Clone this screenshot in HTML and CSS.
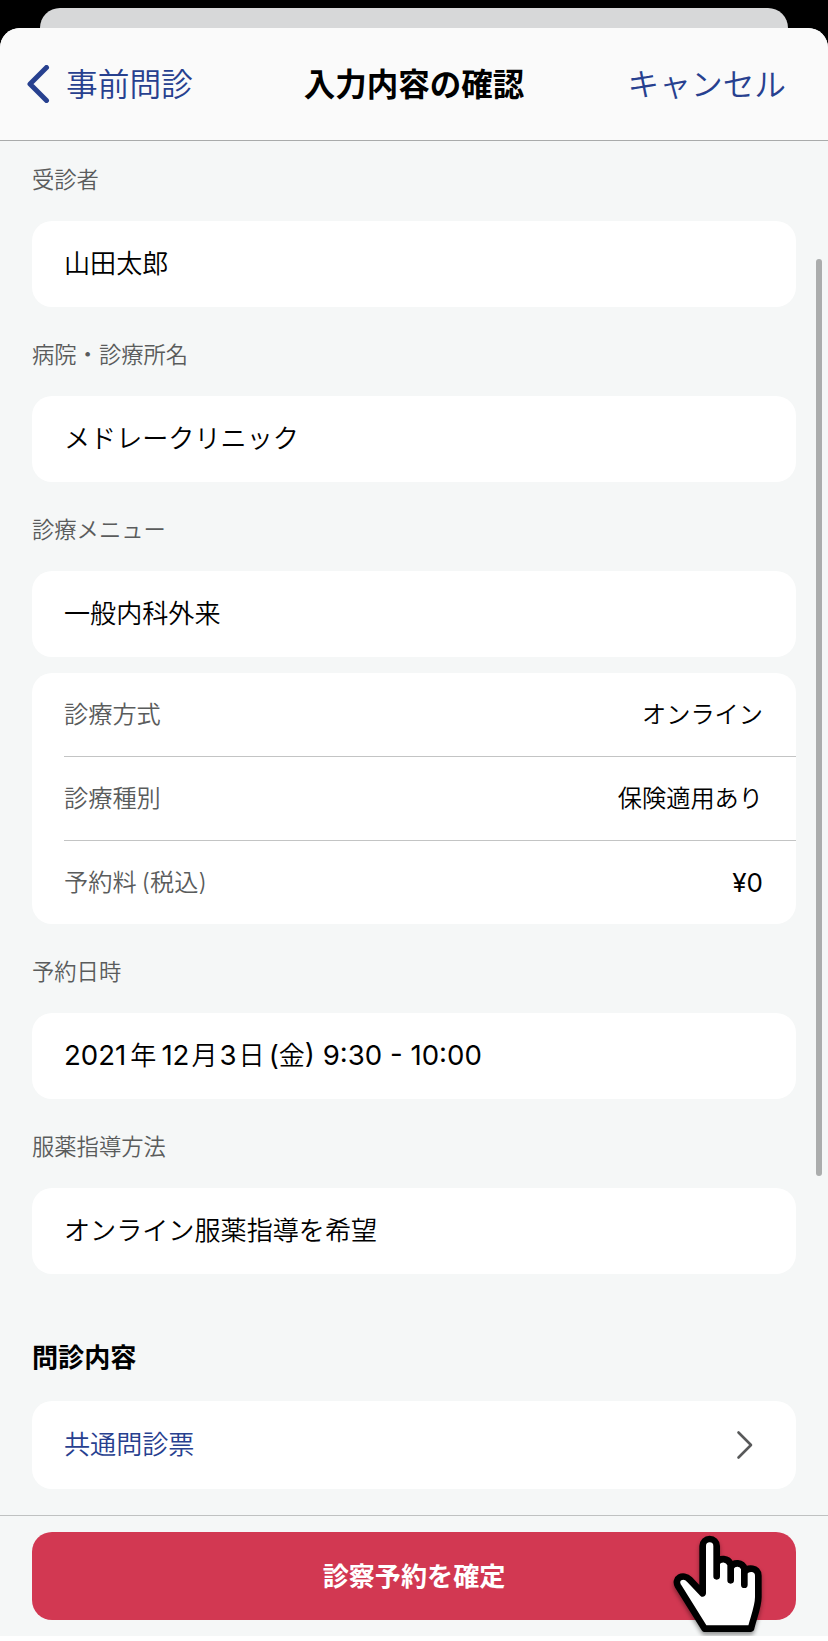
FILE: index.html
```
<!DOCTYPE html>
<html lang="ja">
<head>
    <meta charset="UTF-8">
    <meta name="viewport" content="width=device-width, initial-scale=1.0">
    <title>入力内容の確認</title>
    <link rel="stylesheet" href="styles.css">
</head>
<body>
    <div class="screen">
        <div class="back-sheet"></div>
        <div class="sheet">
            <header class="navbar">
                <a class="nav-back">
                    <svg width="23" height="38" viewBox="0 0 23 38">
                        <path d="M19.5 2.5 L3 19 L19.5 35.5" />
                    </svg>
                    <span>事前問診</span>
                </a>
                <h1>入力内容の確認</h1>
                <a class="nav-cancel"><span>キャンセル</span></a>
            </header>

            <main class="content">
                <h2 class="label">受診者</h2>
                <div class="card"><span>山田太郎</span></div>

                <h2 class="label">病院・診療所名</h2>
                <div class="card"><span>メドレークリニック</span></div>

                <h2 class="label">診療メニュー</h2>
                <div class="card"><span>一般内科外来</span></div>
                <dl class="details">
                    <div class="row"><dt>診療方式</dt><dd>オンライン</dd></div>
                    <div class="row"><dt>診療種別</dt><dd>保険適用あり</dd></div>
                    <div class="row"><dt>予約料<b class="paren">(</b>税込)</dt><dd class="price">¥0</dd></div>
                </dl>

                <h2 class="label">予約日時</h2>
                <div class="card"><span class="date">2021<i class="year">年</i>12<i>月</i>3<i>日</i><b class="paren">(</b><i>金</i>) 9:30 - 10:00</span></div>

                <h2 class="label">服薬指導方法</h2>
                <div class="card"><span>オンライン服薬指導を希望</span></div>

                <h2 class="heading">問診内容</h2>
                <a class="card card-link">
                    <span>共通問診票</span>
                    <svg width="18" height="30" viewBox="0 0 18 30">
                        <path d="M2.5 2.5 L15 15 L2.5 27.5" />
                    </svg>
                </a>
                <div class="scrollbar"></div>
            </main>

            <footer class="footer">
                <button class="confirm">診察予約を確定</button>
                <svg class="cursor" viewBox="215 460 280 315">
                    <path d="M309 641 V499 a21 21 0 0 1 42 0 V590 V549 C360 534 385 534 393 554 V602 V563 C402 546 428 547 434 567 V615 V578 C444 561 476 563 476 588 V652 C476 683 459 722 454 747 H315 L235 619 C222 597 250 579 270 600 Z" />
                </svg>
            </footer>
        </div>
    </div>
</body>
</html>
```
FILE: styles.css
```
* {
    box-sizing: border-box;
    margin: 0;
    padding: 0;
}

body {
    background: white;
    font-family: Inter, "Noto Sans CJK JP", sans-serif;
    font-size: 26px;
    font-weight: 350;
    color: black;
}

.screen {
    height: 1636px;
    padding-top: 8px;
    background: linear-gradient(black 60px, #f5f7f7 60px);
}

.back-sheet {
    height: 20px;
    margin: 0 40px;
    background: #d7d8d9;
    border-radius: 20px 20px 0 0;
}

.sheet {
    height: 1608px;
    display: flex;
    flex-direction: column;
    background: #f5f7f7;
    border-radius: 20px 20px 0 0;
}

.navbar {
    height: 113px;
    display: grid;
    grid-template-columns: 1fr auto 1fr;
    align-items: center;
    padding: 0 42px 0 27px;
    background: #fafafa;
    border-bottom: 1px solid #a9abab;
    border-radius: 20px 20px 0 0;
    font-size: 31.7px;
}

.navbar h1 {
    padding: 0 0 5px 15px;
    font-size: 31.5px;
    font-weight: 600;
}

.nav-back {
    display: flex;
    align-items: center;
    gap: 16px;
    color: #27408f;
}

.nav-back span, .nav-cancel {
    padding-bottom: 5px;
}

.nav-back svg path {
    fill: none;
    stroke: #27408f;
    stroke-width: 5;
    stroke-linecap: round;
    stroke-linejoin: round;
}

.nav-cancel {
    justify-self: end;
    color: #27408f;
}

.content {
    position: relative;
    flex: 1;
    padding: 0 32px;
}

.label {
    height: 89px;
    line-height: 95px;
    font-size: 22.3px;
    font-weight: 350;
    color: #5a5c5c;
}

.label:first-child {
    height: 80px;
    line-height: 77px;
}

.card {
    height: 86px;
    display: flex;
    align-items: center;
    padding: 0 32px;
    background: white;
    border-radius: 20px;
    font-size: 26.1px;
}

.card span {
    padding-bottom: 4px;
}

.card .date {
    font-size: 27.6px;
    font-weight: 400;
    white-space: pre;
}

.date i {
    margin: 0 2px;
    font-size: 26.1px;
    font-style: normal;
    font-weight: 350;
}

.date .year {
    margin: 0 5px 0 4px;
}

.date .paren {
    margin-left: 2px;
}

.date .paren + i {
    margin: 0;
}

.paren {
    margin-left: 5px;
    font-weight: inherit;
}

.details {
    margin-top: 16px;
    padding-left: 32px;
    background: white;
    border-radius: 20px;
    font-size: 24.2px;
}

.row {
    height: 84px;
    display: flex;
    justify-content: space-between;
    align-items: center;
    padding: 0 33px 4px 0;
    border-bottom: 1px solid #c3c4c4;
}

.row:last-child {
    height: 83px;
    border-bottom: none;
}

.row dt {
    color: #5a5c5c;
}

.row .price {
    padding-top: 3px;
    font-size: 26px;
    font-weight: 400;
}

.heading {
    height: 127px;
    padding-top: 65px;
    line-height: 38px;
    font-size: 26.1px;
    font-weight: 600;
}

.card-link {
    height: 88px;
    justify-content: space-between;
    padding-right: 42px;
    color: #27408f;
}

.card-link svg path {
    fill: none;
    stroke: #58595a;
    stroke-width: 2.6;
    stroke-linecap: round;
    stroke-linejoin: round;
}

.scrollbar {
    position: absolute;
    top: 118px;
    right: 6px;
    width: 6px;
    height: 917px;
    background: #abadad;
    border-radius: 3px;
}

.footer {
    position: relative;
    height: 121px;
    padding: 16px 32px;
    border-top: 1px solid #bfc1c1;
}

.confirm {
    display: block;
    width: 100%;
    height: 88px;
    padding-bottom: 2px;
    border: none;
    border-radius: 20px;
    background: #d23852;
    color: white;
    font-family: inherit;
    font-size: 26.1px;
    font-weight: 600;
}

/* pointing hand over the button */
.cursor {
    position: absolute;
    top: 17px;
    left: 671px;
    width: 94px;
    height: 105px;
    filter: drop-shadow(0 3px 2px rgba(0, 0, 0, 0.4));
}

.cursor path {
    fill: white;
    stroke: black;
    stroke-width: 20;
    stroke-linecap: round;
    stroke-linejoin: round;
}
```
